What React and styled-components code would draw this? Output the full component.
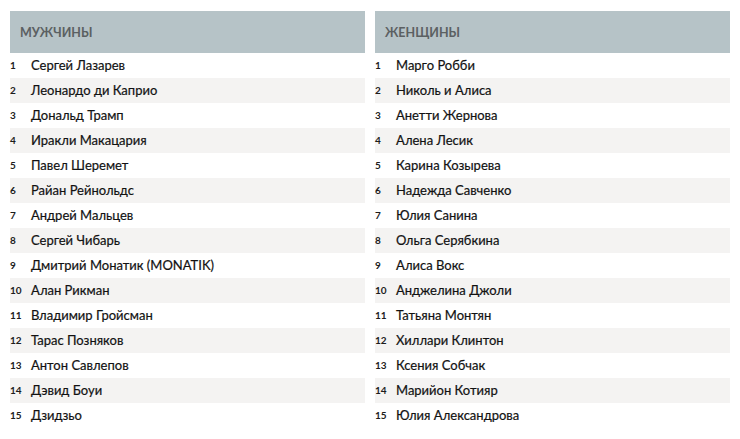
import React from "react";
import styled, { createGlobalStyle } from "styled-components";

const Global = createGlobalStyle`
  html, body { margin: 0; padding: 0; background: #ffffff; }
  body { font-family: Lato, "Open Sans", sans-serif; }
`;

const Page = styled.div`
  display: grid;
  grid-template-columns: 355px 355px;
  column-gap: 10px;
  padding: 11px 10px 0 10px;
  width: 740px;
  height: 439px;
  box-sizing: border-box;
`;

const Table = styled.div`
  display: flex;
  flex-direction: column;
`;

const Header = styled.div`
  height: 42px;
  background: #b6c3c7;
  display: flex;
  align-items: center;
  padding-left: 10px;
  font-size: 12.5px;
  font-weight: 700;
  color: #5b6062;
`;

const Row = styled.div`
  height: 25px;
  box-sizing: border-box;
  padding-bottom: 2px;
  display: flex;
  align-items: center;
  background: ${(p) => (p.$striped ? "#f4f3f2" : "#ffffff")};
`;

const Num = styled.span`
  width: 21px;
  flex: none;
  font-size: 10px;
  font-weight: 700;
  color: #1c1c1c;
`;

const Name = styled.span`
  font-size: 13px;
  color: #121212;
  -webkit-text-stroke: 0.2px #121212;
`;

const men = [
  "Сергей Лазарев",
  "Леонардо ди Каприо",
  "Дональд Трамп",
  "Иракли Макацария",
  "Павел Шеремет",
  "Райан Рейнольдс",
  "Андрей Мальцев",
  "Сергей Чибарь",
  "Дмитрий Монатик (MONATIK)",
  "Алан Рикман",
  "Владимир Гройсман",
  "Тарас Позняков",
  "Антон Савлепов",
  "Дэвид Боуи",
  "Дзидзьо",
];

const women = [
  "Марго Робби",
  "Николь и Алиса",
  "Анетти Жернова",
  "Алена Лесик",
  "Карина Козырева",
  "Надежда Савченко",
  "Юлия Санина",
  "Ольга Серябкина",
  "Алиса Вокс",
  "Анджелина Джоли",
  "Татьяна Монтян",
  "Хиллари Клинтон",
  "Ксения Собчак",
  "Марийон Котияр",
  "Юлия Александрова",
];

function List({ title, items }) {
  return (
    <Table>
      <Header>{title}</Header>
      {items.map((n, i) => (
        <Row key={n} $striped={i % 2 === 1}>
          <Num>{i + 1}</Num>
          <Name>{n}</Name>
        </Row>
      ))}
    </Table>
  );
}

export default function App() {
  return (
    <>
      <Global />
      <Page>
        <List title="МУЖЧИНЫ" items={men} />
        <List title="ЖЕНЩИНЫ" items={women} />
      </Page>
    </>
  );
}
